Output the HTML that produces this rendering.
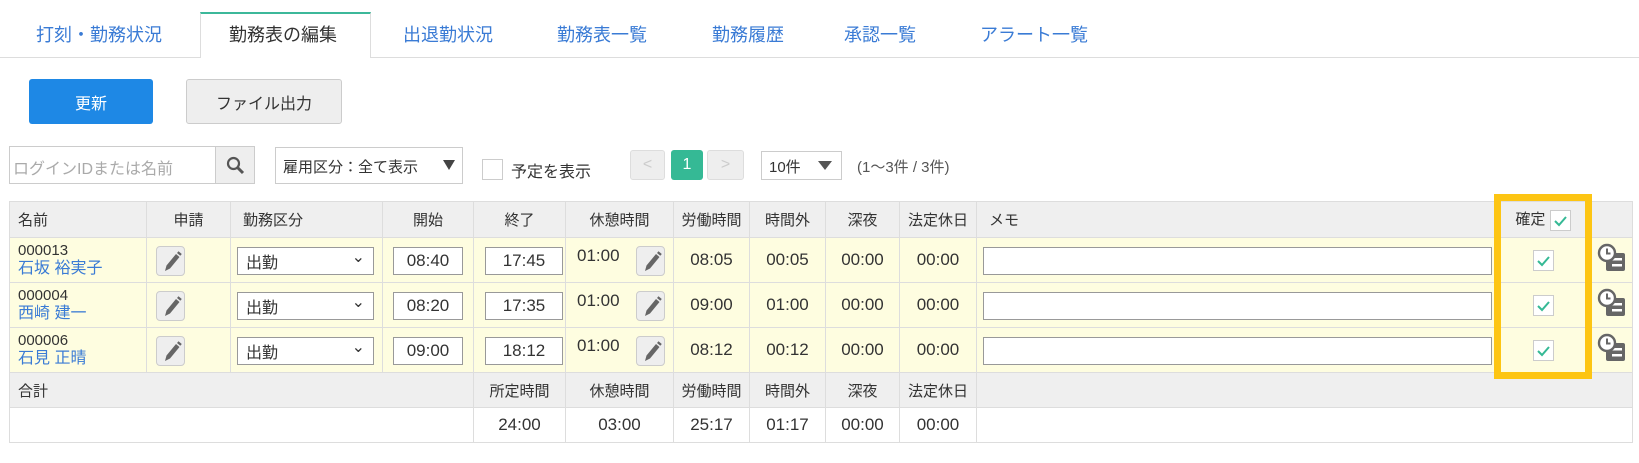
<!DOCTYPE html>
<html><head><meta charset="utf-8"><style>
*{box-sizing:border-box}
body{margin:0;width:1639px;height:463px;background:#fff;font-family:"Liberation Sans","Noto Sans CJK JP",sans-serif;color:#333;position:relative;overflow:hidden}
.a{position:absolute}
.tab{position:absolute;top:21px;font-size:18px;color:#3a7bd5}
.tabbar{left:0;top:57px;width:1639px;height:1px;background:#ddd}
.act{left:200px;top:12px;width:171px;height:46px;border:1px solid #ddd;border-top:2px solid #3cb89a;border-bottom:none;background:#fff}
.btn{border-radius:3px;display:flex;align-items:center;justify-content:center;font-size:16px}
table{position:absolute;left:9px;top:201px;border-collapse:collapse;table-layout:fixed;font-size:15px}
td{border:1px solid #ddd;padding:0;position:relative;text-align:center}
tr.h td{background:#efefef;height:36px}
tr.r td{background:#fefde0;height:45px}
tr.s td{background:#efefef;height:35px}
tr.v td{background:#fff;height:35px}
.pen{position:absolute;width:29px;height:30px;border:1px solid #ccc;border-radius:4px;background:#eee;top:8px}
.pen svg{position:absolute;left:1px;top:1px}
.inp{position:absolute;top:9px;height:28px;border:1px solid #999;background:#fff;font-size:17px;display:flex;align-items:center;justify-content:center}
.cb{display:inline-block;width:21px;height:21px;border:1px solid #ccc;background:#fff;vertical-align:middle;position:relative}
.nm{color:#3a7bd5;font-size:16px}
.t{font-size:17px}
</style></head><body>
<div class="a tabbar"></div>
<div class="a act"></div>
<div class="tab" style="left:36px">打刻・勤務状況</div>
<div class="tab" style="left:229px;color:#333">勤務表の編集</div>
<div class="tab" style="left:403px">出退勤状況</div>
<div class="tab" style="left:557px">勤務表一覧</div>
<div class="tab" style="left:712px">勤務履歴</div>
<div class="tab" style="left:844px">承認一覧</div>
<div class="tab" style="left:980px">アラート一覧</div>

<div class="a btn" style="left:29px;top:79px;width:124px;height:45px;background:#1e88e5;color:#fff">更新</div>
<div class="a btn" style="left:186px;top:79px;width:156px;height:45px;background:#eee;border:1px solid #ccc;color:#333">ファイル出力</div>

<div class="a" style="left:9px;top:146px;width:246px;height:38px;border:1px solid #ccc;background:#fff"></div>
<div class="a" style="left:13px;top:155px;font-size:16px;color:#aaa">ログインIDまたは名前</div>
<div class="a" style="left:215px;top:146px;width:40px;height:38px;border:1px solid #ccc;background:#eee"></div>
<svg class="a" style="left:226px;top:156px" width="19" height="19" viewBox="0 0 19 19"><circle cx="7.5" cy="7.5" r="5.5" fill="none" stroke="#555" stroke-width="2.2"/><line x1="11.5" y1="11.5" x2="17" y2="17" stroke="#555" stroke-width="3"/></svg>
<div class="a" style="left:275px;top:147px;width:188px;height:37px;border:1px solid #ccc;background:#fff"></div>
<div class="a" style="left:283px;top:156px;font-size:15px">雇用区分：全て表示</div>
<div class="a" style="left:443px;top:160px;width:0;height:0;border-left:6px solid transparent;border-right:6px solid transparent;border-top:10px solid #444"></div>
<div class="a" style="left:482px;top:159px;width:21px;height:21px;border:1px solid #ccc"></div>
<div class="a" style="left:511px;top:158px;font-size:16px">予定を表示</div>
<div class="a btn" style="left:630px;top:150px;width:35px;height:30px;background:#eee;border:1px solid #ddd;color:#ccc">&lt;</div>
<div class="a btn" style="left:671px;top:150px;width:32px;height:30px;background:#35b995;color:#fff">1</div>
<div class="a btn" style="left:707px;top:150px;width:37px;height:30px;background:#eee;border:1px solid #ddd;color:#ccc">&gt;</div>
<div class="a" style="left:761px;top:151px;width:81px;height:29px;border:1px solid #ccc;background:#fff"></div>
<div class="a" style="left:769px;top:156px;font-size:15px">10件</div>
<div class="a" style="left:818px;top:161px;width:0;height:0;border-left:7px solid transparent;border-right:7px solid transparent;border-top:9px solid #555"></div>
<div class="a" style="left:857px;top:156px;font-size:15px;color:#555">(1〜3件 / 3件)</div>

<table>
<colgroup><col style="width:137px"><col style="width:84px"><col style="width:152px"><col style="width:91px"><col style="width:92px"><col style="width:108px"><col style="width:76px"><col style="width:76px"><col style="width:74px"><col style="width:77px"><col style="width:521px"><col style="width:91px"><col style="width:44px"></colgroup>
<tr class="h"><td style="text-align:left;padding-left:8px">名前</td><td>申請</td><td style="text-align:left;padding-left:12px">勤務区分</td><td>開始</td><td>終了</td><td>休憩時間</td><td>労働時間</td><td>時間外</td><td>深夜</td><td>法定休日</td><td style="text-align:left;padding-left:12px">メモ</td><td>確定 <span class="cb"><svg width="19" height="19" viewBox="0 0 19 19" style="position:absolute;left:0;top:0"><path d="M4 10l4 4 7-8" fill="none" stroke="#35b995" stroke-width="2"/></svg></span></td><td></td></tr>
<tr class="r"><td style="text-align:left;padding-left:8px;line-height:18px">000013<br><span class="nm">石坂 裕実子</span></td><td><div class="pen" style="left:9px"><svg width="27" height="28" viewBox="0 0 27 28"><path d="M7 23l1.5-5.5L18 6l3.5 3L12 20.5z" fill="#666"/><path d="M19 5l1.5-1.8 3.3 2.8-1.5 1.8z" fill="#666"/></svg></div></td><td><div class="inp" style="left:6px;width:137px;justify-content:space-between;padding:0 8px;font-size:16px">出勤<span style="font-size:16px;margin-top:-8px">&#8964;</span></div></td><td><div class="inp" style="left:10px;width:70px">08:40</div></td><td><div class="inp" style="left:11px;width:78px">17:45</div></td><td><span style="position:absolute;left:11px;top:8px;font-size:17px">01:00</span><div class="pen" style="left:70px"><svg width="27" height="28" viewBox="0 0 27 28"><path d="M7 23l1.5-5.5L18 6l3.5 3L12 20.5z" fill="#666"/><path d="M19 5l1.5-1.8 3.3 2.8-1.5 1.8z" fill="#666"/></svg></div></td><td class="t">08:05</td><td class="t">00:05</td><td class="t">00:00</td><td class="t">00:00</td><td><div class="inp" style="left:6px;width:509px"></div></td><td><span class="cb"><svg width="19" height="19" viewBox="0 0 19 19" style="position:absolute;left:0;top:0"><path d="M4 10l4 4 7-8" fill="none" stroke="#35b995" stroke-width="2"/></svg></span></td><td><svg width="32" height="30" viewBox="0 0 32 30"><rect x="11" y="10" width="19" height="18" rx="2" fill="#666"/><rect x="17" y="15" width="10" height="2.5" fill="#fff"/><rect x="17" y="21" width="10" height="2.5" fill="#fff"/><circle cx="12" cy="10" r="8" fill="#fff" stroke="#666" stroke-width="2.4"/><path d="M12 5.5v5h3.5" stroke="#666" stroke-width="2" fill="none"/></svg></td></tr>
<tr class="r"><td style="text-align:left;padding-left:8px;line-height:18px">000004<br><span class="nm">西崎 建一</span></td><td><div class="pen" style="left:9px"><svg width="27" height="28" viewBox="0 0 27 28"><path d="M7 23l1.5-5.5L18 6l3.5 3L12 20.5z" fill="#666"/><path d="M19 5l1.5-1.8 3.3 2.8-1.5 1.8z" fill="#666"/></svg></div></td><td><div class="inp" style="left:6px;width:137px;justify-content:space-between;padding:0 8px;font-size:16px">出勤<span style="font-size:16px;margin-top:-8px">&#8964;</span></div></td><td><div class="inp" style="left:10px;width:70px">08:20</div></td><td><div class="inp" style="left:11px;width:78px">17:35</div></td><td><span style="position:absolute;left:11px;top:8px;font-size:17px">01:00</span><div class="pen" style="left:70px"><svg width="27" height="28" viewBox="0 0 27 28"><path d="M7 23l1.5-5.5L18 6l3.5 3L12 20.5z" fill="#666"/><path d="M19 5l1.5-1.8 3.3 2.8-1.5 1.8z" fill="#666"/></svg></div></td><td class="t">09:00</td><td class="t">01:00</td><td class="t">00:00</td><td class="t">00:00</td><td><div class="inp" style="left:6px;width:509px"></div></td><td><span class="cb"><svg width="19" height="19" viewBox="0 0 19 19" style="position:absolute;left:0;top:0"><path d="M4 10l4 4 7-8" fill="none" stroke="#35b995" stroke-width="2"/></svg></span></td><td><svg width="32" height="30" viewBox="0 0 32 30"><rect x="11" y="10" width="19" height="18" rx="2" fill="#666"/><rect x="17" y="15" width="10" height="2.5" fill="#fff"/><rect x="17" y="21" width="10" height="2.5" fill="#fff"/><circle cx="12" cy="10" r="8" fill="#fff" stroke="#666" stroke-width="2.4"/><path d="M12 5.5v5h3.5" stroke="#666" stroke-width="2" fill="none"/></svg></td></tr>
<tr class="r"><td style="text-align:left;padding-left:8px;line-height:18px">000006<br><span class="nm">石見 正晴</span></td><td><div class="pen" style="left:9px"><svg width="27" height="28" viewBox="0 0 27 28"><path d="M7 23l1.5-5.5L18 6l3.5 3L12 20.5z" fill="#666"/><path d="M19 5l1.5-1.8 3.3 2.8-1.5 1.8z" fill="#666"/></svg></div></td><td><div class="inp" style="left:6px;width:137px;justify-content:space-between;padding:0 8px;font-size:16px">出勤<span style="font-size:16px;margin-top:-8px">&#8964;</span></div></td><td><div class="inp" style="left:10px;width:70px">09:00</div></td><td><div class="inp" style="left:11px;width:78px">18:12</div></td><td><span style="position:absolute;left:11px;top:8px;font-size:17px">01:00</span><div class="pen" style="left:70px"><svg width="27" height="28" viewBox="0 0 27 28"><path d="M7 23l1.5-5.5L18 6l3.5 3L12 20.5z" fill="#666"/><path d="M19 5l1.5-1.8 3.3 2.8-1.5 1.8z" fill="#666"/></svg></div></td><td class="t">08:12</td><td class="t">00:12</td><td class="t">00:00</td><td class="t">00:00</td><td><div class="inp" style="left:6px;width:509px"></div></td><td><span class="cb"><svg width="19" height="19" viewBox="0 0 19 19" style="position:absolute;left:0;top:0"><path d="M4 10l4 4 7-8" fill="none" stroke="#35b995" stroke-width="2"/></svg></span></td><td><svg width="32" height="30" viewBox="0 0 32 30"><rect x="11" y="10" width="19" height="18" rx="2" fill="#666"/><rect x="17" y="15" width="10" height="2.5" fill="#fff"/><rect x="17" y="21" width="10" height="2.5" fill="#fff"/><circle cx="12" cy="10" r="8" fill="#fff" stroke="#666" stroke-width="2.4"/><path d="M12 5.5v5h3.5" stroke="#666" stroke-width="2" fill="none"/></svg></td></tr>
<tr class="s"><td colspan="4" style="text-align:left;padding-left:8px">合計</td><td>所定時間</td><td>休憩時間</td><td>労働時間</td><td>時間外</td><td>深夜</td><td>法定休日</td><td colspan="3"></td></tr>
<tr class="v"><td colspan="4"></td><td class="t">24:00</td><td class="t">03:00</td><td class="t">25:17</td><td class="t">01:17</td><td class="t">00:00</td><td class="t">00:00</td><td colspan="3"></td></tr>
</table>
<div class="a" style="left:1494px;top:194px;width:98px;height:185px;border:7px solid #fdc513"></div>
</body></html>
